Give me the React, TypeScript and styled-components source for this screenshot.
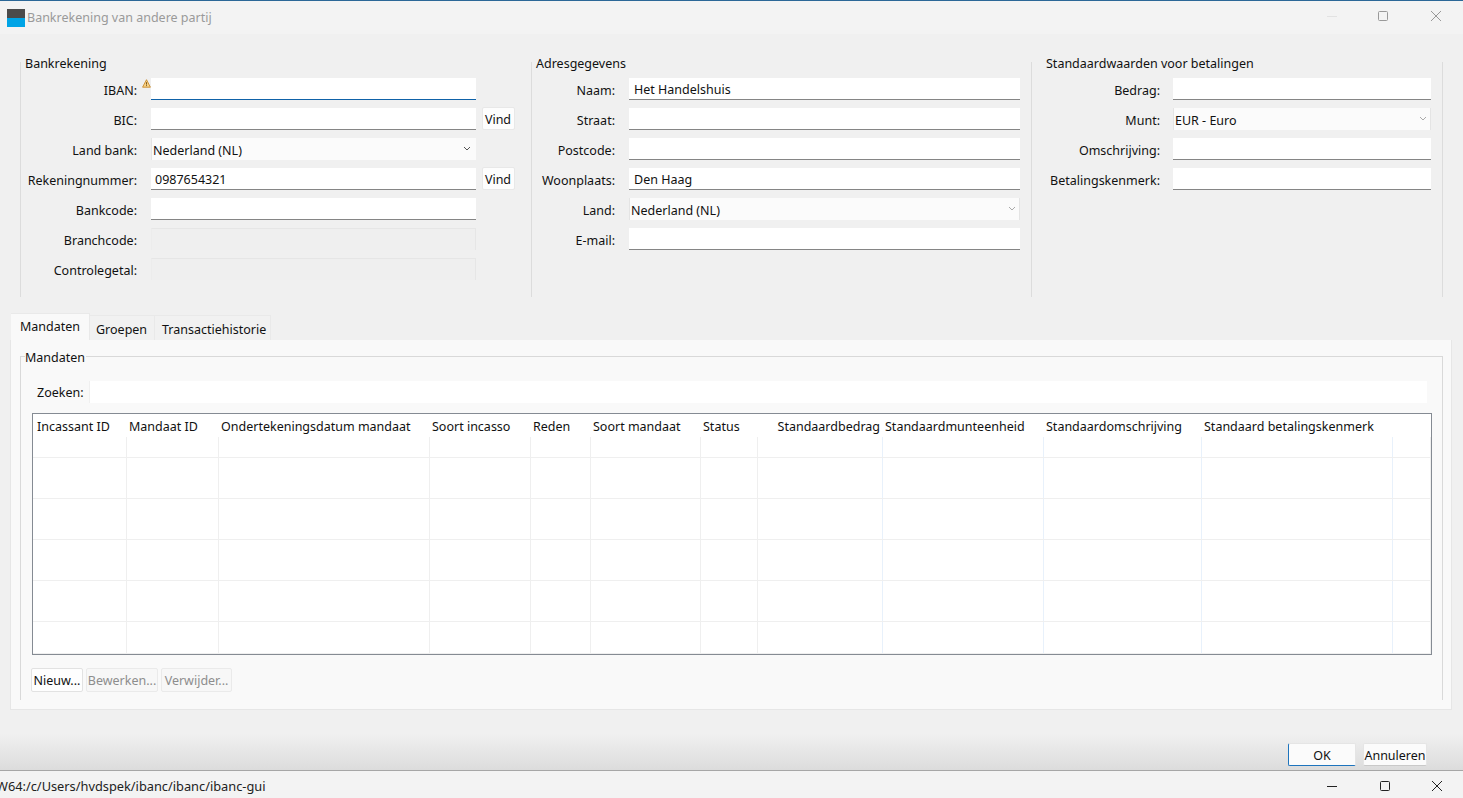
import React from 'react';
import styled, { createGlobalStyle } from 'styled-components';

const GlobalStyle = createGlobalStyle`
  html, body { margin: 0; padding: 0; background: #f0f0f0; }
  body { font-family: "Noto Sans", "Open Sans", sans-serif; font-size: 12.5px; color: #111; }
  * { box-sizing: border-box; }
`;

const Page = styled.div`
  width: 1463px;
  height: 798px;
  overflow: hidden;
  display: flex;
  flex-direction: column;
  background: #f0f0f0;
`;

const TitleBar = styled.div`
  height: 34px;
  flex: none;
  display: flex;
  align-items: center;
  padding: 0 0 0 7px;
  background: #f3f3f3;
  border-top: 1px solid #2b6797;
`;

const AppIcon = styled.div`
  width: 18px;
  height: 18px;
  margin-right: 2px;
  background: linear-gradient(#4b4b4b 50%, #00a4e6 50%);
`;

const TitleText = styled.div`
  flex: 1;
  color: #9a9a9a;
`;

const WindowButton = styled.div<{ $w: number; $raise?: number }>`
  width: ${(p) => p.$w}px;
  height: 20px;
  margin-bottom: ${(p) => p.$raise ?? 0}px;
  display: flex;
  align-items: center;
  justify-content: center;
`;

const Forms = styled.div`
  display: grid;
  grid-template-columns: 511px 500px 412px;
  height: 235px;
  margin: 28px 0 16px 20px;
  flex: none;
`;

const Section = styled.section<{ $last?: boolean }>`
  position: relative;
  border-left: 1px solid #dcdcdc;
  border-right: ${(p) => (p.$last ? '1px solid #dcdcdc' : 'none')};
  padding-top: 16px;
`;

const SectionTitle = styled.div<{ $x: number }>`
  position: absolute;
  top: -7px;
  left: ${(p) => p.$x}px;
  line-height: 17px;
  color: #111;
`;

const Fields = styled.div<{ $label: number; $input: number; $extra?: number }>`
  display: grid;
  grid-template-columns: ${(p) => p.$label}px ${(p) => p.$input}px ${(p) => p.$extra ?? 0}px;
  grid-auto-rows: 22px;
  row-gap: 8px;
  align-items: center;
`;

const Label = styled.label<{ $gap: number }>`
  text-align: right;
  padding-right: ${(p) => p.$gap}px;
  line-height: 26px;
  height: 22px;
  position: relative;
  white-space: nowrap;
`;

const Warning = styled.span`
  position: absolute;
  right: 0;
  top: 1px;
  width: 9px;
  height: 9px;
  display: flex;
`;

const TextInput = styled.input<{ $focus?: boolean; $pad?: number }>`
  width: 100%;
  height: 22px;
  border: 0;
  outline: 0;
  background: #fff;
  border-bottom: 1px solid ${(p) => (p.$focus ? '#0f62a8' : '#858585')};
  padding: 1px 0 0 ${(p) => p.$pad ?? 4}px;
  font: inherit;
  color: #111;
`;

const DisabledInput = styled.div`
  height: 22px;
  border: 1px solid #e6e6e6;
  border-bottom: 0;
  border-left-color: #ececec;
  background: #efefef;
`;

const Combo = styled.div<{ $soft?: boolean }>`
  height: 22px;
  display: flex;
  align-items: center;
  justify-content: space-between;
  padding: 2px ${(p) => (p.$soft ? 3 : 5)}px 0 1px;
  background: #fbfbfb;
  border-left: 1px solid #e4e4e4;
  border-right: ${(p) => (p.$soft ? '1px solid #e4e4e4' : '0')};
`;

const ComboArrow = styled.span`
  display: flex;
  margin-top: -3px;
`;

const SmallButton = styled.button`
  width: 33px;
  height: 23px;
  margin: -1px 0 0 6px;
  padding: 2px 1px 0 0;
  background: #fdfdfd;
  border: 1px solid #e8e8e8;
  border-radius: 2px;
  font: inherit;
  color: #111;
`;

const Tabs = styled.div`
  flex: none;
  height: 27px;
  margin-left: 11px;
  display: flex;
  align-items: flex-end;
`;

const Tab = styled.div<{ $active?: boolean; $w: number; $pad?: number }>`
  width: ${(p) => p.$w}px;
  height: ${(p) => (p.$active ? 27 : 25)}px;
  padding: ${(p) => (p.$active ? '0 0 2px 9px' : `2px 0 0 ${p.$pad ?? 6}px`)};
  display: flex;
  align-items: center;
  background: ${(p) => (p.$active ? '#f9f9f9' : '#f1f1f1')};
  border: 1px solid #e9e9e9;
  border-width: 1px 1px 0 0;
  white-space: nowrap;
`;

const TabPanel = styled.div`
  flex: none;
  width: 1442px;
  height: 370px;
  margin-left: 10px;
  padding: 16px 8px 0 9px;
  background: #f9f9f9;
  border: 1px solid #e6e6e6;
  border-top: 0;
`;

const GroupBox = styled.div`
  position: relative;
  height: 344px;
  border: 1px solid #d9d9d9;
  border-bottom: 0;
  padding: 24px 15px 0 11px;
`;

const GroupTitle = styled.div`
  position: absolute;
  top: -8px;
  left: 4px;
  padding-right: 1px;
  line-height: 17px;
  background: #f9f9f9;
`;

const SearchRow = styled.div`
  display: flex;
  align-items: center;
  gap: 5px;
  height: 22px;
  padding-left: 5px;
`;

const SearchInput = styled.input`
  flex: 1;
  height: 22px;
  border: 0;
  outline: 0;
  background: #fff;
  border-left: 1px solid #f0f0f0;
`;

const Grid = styled.div`
  width: 1400px;
  height: 242px;
  margin-top: 10px;
  background: #fff;
  border: 1px solid #858b93;
  overflow: hidden;
`;

const GridHead = styled.div`
  display: flex;
  height: 23px;
`;

const HeadCell = styled.div<{ $w: number; $right?: boolean; $first?: boolean }>`
  flex: none;
  width: ${(p) => p.$w}px;
  padding: 0 3px 0 ${(p) => (p.$first ? 4 : 2)}px;
  text-align: ${(p) => (p.$right ? 'right' : 'left')};
  line-height: 25px;
  white-space: nowrap;
`;

const GridRow = styled.div<{ $h: number }>`
  display: flex;
  height: ${(p) => p.$h}px;
  border-bottom: 1px solid #efefef;
`;

const GridCell = styled.div<{ $w: number; $blue?: boolean }>`
  flex: none;
  width: ${(p) => p.$w}px;
  border-right: 1px solid ${(p) => (p.$blue ? '#e8f1fb' : '#efefef')};
`;

const Actions = styled.div`
  display: flex;
  gap: 3px;
  margin: 13px 0 0 -1px;
`;

const ActionButton = styled.button<{ $w: number; $off?: boolean }>`
  width: ${(p) => p.$w}px;
  height: 24px;
  padding: 0;
  font: inherit;
  color: ${(p) => (p.$off ? '#8d8d8d' : '#111')};
  background: ${(p) => (p.$off ? '#f7f7f7' : '#fefefe')};
  border: 1px solid ${(p) => (p.$off ? '#eaeaea' : '#e2e2e2')};
  border-radius: 2px;
  white-space: nowrap;
`;

const Footer = styled.div`
  flex: 1;
  display: flex;
  justify-content: flex-end;
  align-items: flex-end;
  gap: 7px;
  padding: 0 36px 4px 0;
  background: linear-gradient(#f0f0f0 40%, #dcdcdc 100%);
`;

const OkButton = styled.button`
  width: 68px;
  height: 23px;
  padding: 2px 0 0;
  font: inherit;
  color: #111;
  background: #fbfbfb;
  border: 1px solid #e5e5e5;
  border-left-color: #1d74bd;
  border-bottom-color: #1d74bd;
  border-radius: 2px;
`;

const CancelButton = styled.button`
  width: 64px;
  height: 23px;
  padding: 2px 0 0;
  font: inherit;
  color: #111;
  background: #fbfbfb;
  border: 1px solid #e5e5e5;
  border-bottom-color: #c9c9c9;
  border-radius: 2px;
`;

const TerminalBar = styled.div`
  flex: none;
  height: 28px;
  padding-top: 2px;
  display: flex;
  align-items: center;
  background: #f3f3f3;
  border-top: 1px solid #a6a6a6;
`;

const TerminalPath = styled.div`
  flex: 1;
  margin-left: -4px;
  font-size: 12.8px;
  color: #222;
`;

const Chevron: React.FC<{ color?: string }> = ({ color = '#555' }) => (
  <ComboArrow>
    <svg width="8" height="5" viewBox="0 0 8 5" fill="none">
      <path d="M1 1l3 3 3-3" stroke={color} strokeWidth="1" />
    </svg>
  </ComboArrow>
);

const MinIcon: React.FC<{ color: string }> = ({ color }) => (
  <svg width="10" height="10" viewBox="0 0 10 10" fill="none">
    <path d="M0 5.5h10" stroke={color} />
  </svg>
);

const MaxIcon: React.FC<{ color: string }> = ({ color }) => (
  <svg width="10" height="10" viewBox="0 0 10 10" fill="none">
    <rect x="0.5" y="0.5" width="9" height="9" rx="1" stroke={color} />
  </svg>
);

const CloseIcon: React.FC<{ color: string }> = ({ color }) => (
  <svg width="10" height="10" viewBox="0 0 10 10" fill="none">
    <path d="M0 0l10 10M10 0L0 10" stroke={color} />
  </svg>
);

const WarnIcon = () => (
  <svg width="9" height="9" viewBox="0 0 9 9">
    <path d="M4.5.7L8.4 8.2H.6z" fill="#f8d48a" stroke="#c98a2b" strokeWidth="0.9" strokeLinejoin="round" />
    <path d="M4.5 3.2v2.4M4.5 6.2v.9" stroke="#6b4a12" strokeWidth="0.9" />
  </svg>
);

const columns = [
  { title: 'Incassant ID', w: 94 },
  { title: 'Mandaat ID', w: 92 },
  { title: 'Ondertekeningsdatum mandaat', w: 211 },
  { title: 'Soort incasso', w: 101 },
  { title: 'Reden', w: 60 },
  { title: 'Soort mandaat', w: 110 },
  { title: 'Status', w: 57 },
  { title: 'Standaardbedrag', w: 125, right: true },
  { title: 'Standaardmunteenheid', w: 161, blue: true },
  { title: 'Standaardomschrijving', w: 158, blue: true },
  { title: 'Standaard betalingskenmerk', w: 191, blue: true },
  { title: '', w: 38 },
];

const rowHeights = [21, 41, 41, 41, 41, 32];

const App: React.FC = () => {
  return (
    <Page>
      <GlobalStyle />
      <TitleBar>
        <AppIcon />
        <TitleText>Bankrekening van andere partij</TitleText>
        <WindowButton $w={51} $raise={3}><MinIcon color="#e2e2e2" /></WindowButton>
        <WindowButton $w={51} $raise={3}><MaxIcon color="#999" /></WindowButton>
        <WindowButton $w={55} $raise={3}><CloseIcon color="#999" /></WindowButton>
      </TitleBar>

      <Forms>
        <Section>
          <SectionTitle $x={4}>Bankrekening</SectionTitle>
          <Fields $label={130} $input={325} $extra={40}>
            <Label $gap={14}>IBAN:<Warning><WarnIcon /></Warning></Label>
            <TextInput $focus readOnly />
            <span />
            <Label $gap={14}>BIC:</Label>
            <TextInput readOnly />
            <SmallButton>Vind</SmallButton>
            <Label $gap={14}>Land bank:</Label>
            <Combo><span>Nederland (NL)</span><Chevron /></Combo>
            <span />
            <Label $gap={14}>Rekeningnummer:</Label>
            <TextInput readOnly value="0987654321" />
            <SmallButton>Vind</SmallButton>
            <Label $gap={14}>Bankcode:</Label>
            <TextInput readOnly />
            <span />
            <Label $gap={14}>Branchcode:</Label>
            <DisabledInput />
            <span />
            <Label $gap={14}>Controlegetal:</Label>
            <DisabledInput />
            <span />
          </Fields>
        </Section>

        <Section>
          <SectionTitle $x={4}>Adresgegevens</SectionTitle>
          <Fields $label={97} $input={391}>
            <Label $gap={14}>Naam:</Label>
            <TextInput readOnly value="Het Handelshuis" $pad={5} />
            <span />
            <Label $gap={14}>Straat:</Label>
            <TextInput readOnly />
            <span />
            <Label $gap={14}>Postcode:</Label>
            <TextInput readOnly />
            <span />
            <Label $gap={14}>Woonplaats:</Label>
            <TextInput readOnly value="Den Haag" $pad={5} />
            <span />
            <Label $gap={14}>Land:</Label>
            <Combo $soft><span>Nederland (NL)</span><Chevron color="#aaa" /></Combo>
            <span />
            <Label $gap={14}>E-mail:</Label>
            <TextInput readOnly />
            <span />
          </Fields>
        </Section>

        <Section $last>
          <SectionTitle $x={14}>Standaardwaarden voor betalingen</SectionTitle>
          <Fields $label={141} $input={258}>
            <Label $gap={13}>Bedrag:</Label>
            <TextInput readOnly />
            <span />
            <Label $gap={13}>Munt:</Label>
            <Combo $soft><span>EUR - Euro</span><Chevron color="#aaa" /></Combo>
            <span />
            <Label $gap={13}>Omschrijving:</Label>
            <TextInput readOnly />
            <span />
            <Label $gap={13}>Betalingskenmerk:</Label>
            <TextInput readOnly />
            <span />
          </Fields>
        </Section>
      </Forms>

      <Tabs>
        <Tab $active $w={79}>Mandaten</Tab>
        <Tab $w={65}>Groepen</Tab>
        <Tab $w={116} $pad={7}>Transactiehistorie</Tab>
      </Tabs>

      <TabPanel>
        <GroupBox>
          <GroupTitle>Mandaten</GroupTitle>
          <SearchRow>
            <span>Zoeken:</span>
            <SearchInput readOnly />
          </SearchRow>
          <Grid>
            <GridHead>
              {columns.map((c, i) => (
                <HeadCell key={c.title} $w={c.w} $right={c.right} $first={i === 0}>{c.title}</HeadCell>
              ))}
            </GridHead>
            {rowHeights.map((h, i) => (
              <GridRow key={i} $h={h}>
                {columns.map((c, j) => (
                  <GridCell key={j} $w={c.w} $blue={c.blue || j === 7} />
                ))}
              </GridRow>
            ))}
          </Grid>
          <Actions>
            <ActionButton $w={52}>Nieuw...</ActionButton>
            <ActionButton $w={72} $off>Bewerken...</ActionButton>
            <ActionButton $w={71} $off>Verwijder...</ActionButton>
          </Actions>
        </GroupBox>
      </TabPanel>

      <Footer>
        <OkButton>OK</OkButton>
        <CancelButton>Annuleren</CancelButton>
      </Footer>

      <TerminalBar>
        <TerminalPath>W64:/c/Users/hvdspek/ibanc/ibanc/ibanc-gui</TerminalPath>
        <WindowButton $w={53}><MinIcon color="#222" /></WindowButton>
        <WindowButton $w={53}><MaxIcon color="#222" /></WindowButton>
        <WindowButton $w={52}><CloseIcon color="#222" /></WindowButton>
      </TerminalBar>
    </Page>
  );
};

export default App;
